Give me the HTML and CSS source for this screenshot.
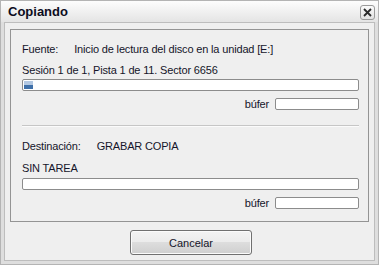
FILE: index.html
```html
<!doctype html>
<html lang="es">
	<head>
		<meta charset="utf-8" />
		<meta name="viewport" content="width=device-width,initial-scale=1" />
		<title>Copiando</title>
		<link rel="stylesheet" href="styles.css">
	</head>
	<body>
		<div class="window">
			<div class="titlebar">
				<span class="title">Copiando</span>
				<button class="close" type="button" aria-label="Cerrar">
					<svg width="9" height="9" viewBox="0 0 9 9"><path d="M1 1 8 8M8 1 1 8" stroke="#2a2a2a" stroke-width="1.8" fill="none" /></svg>
				</button>
			</div>

			<div class="client">
				<section class="group">
					<div class="line line-first">
						<span class="label">Fuente:</span>
						<span>Inicio de lectura del disco en la unidad [E:]</span>
					</div>
					<div class="line line-status">Sesión 1 de 1, Pista 1 de 11. Sector 6656</div>
					<div class="bar bar-main"><div class="fill" style="width: 9px"></div></div>
					<div class="buffer">
						<span>búfer</span>
						<div class="bar bar-small"></div>
					</div>

					<div class="sep"></div>

					<div class="line line-dest">
						<span class="label">Destinación:</span>
						<span>GRABAR COPIA</span>
					</div>
					<div class="line line-status2">SIN TAREA</div>
					<div class="bar bar-main bar-second"></div>
					<div class="buffer">
						<span>búfer</span>
						<div class="bar bar-small"></div>
					</div>
				</section>

				<div class="actions">
					<button class="btn" type="button">Cancelar</button>
				</div>
			</div>
		</div>
	</body>
</html>
```
FILE: styles.css
```css
html,
body {
	margin: 0;
	padding: 0;
	background: #dadada;
}

body {
	font-family: "Liberation Sans", Arial, sans-serif;
	font-size: 11px;
	color: #15152a;
}

.window {
	box-sizing: border-box;
	width: 379px;
	height: 265px;
	border: 1px solid #b4b4b4;
	background: #dedede;
}

.titlebar {
	display: flex;
	align-items: center;
	justify-content: space-between;
	height: 21px;
	padding: 0 3px 0 7px;
	background: linear-gradient(#fdfdfd, #e4e4e4);

	& .title {
		font-size: 13px;
		font-weight: 700;
		color: #0c0c1e;
	}
}

.close {
	display: flex;
	align-items: center;
	justify-content: center;
	box-sizing: border-box;
	width: 15px;
	height: 15px;
	margin-top: 2px;
	padding: 0;
	border: 1px solid #9a9a9a;
	border-radius: 3px;
	background: linear-gradient(#fbfbfb, #e2e2e2);
}

.client {
	margin: 0 3px 3px;
	padding: 6px 5px 5px;
	border: 1px solid #bdbdbd;
	background: #efefef;
}

.group {
	box-sizing: border-box;
	height: 193px;
	padding: 12px 9px 0 11px;
	border: 1px solid #949494;
}

.line {
	display: flex;
	gap: 16px;
	height: 14px;
	line-height: 14px;
	letter-spacing: -0.16px;
	white-space: nowrap;
}

.line-status {
	margin-top: 7px;
}

.line-dest {
	margin-top: 12px;
}

.line-status2 {
	margin-top: 8px;
}

.bar {
	box-sizing: border-box;
	height: 12px;
	border: 1px solid #8c8c8c;
	border-radius: 2px;
	background: #fff;
	padding: 1px;
}

.bar-main {
	margin-top: 2px;
}

.bar-second {
	margin-top: 3px;
}

.fill {
	height: 100%;
	background: linear-gradient(#b3c8e2 0 45%, #3f70a9 45%);
}

.buffer {
	display: flex;
	align-items: center;
	justify-content: flex-end;
	gap: 6px;
	height: 12px;
	margin-top: 7px;
	line-height: 12px;
	letter-spacing: -0.16px;

	& .bar-small {
		width: 84px;
	}
}

.sep {
	margin-top: 15px;
	border-top: 1px solid #c6c6c6;
	border-bottom: 1px solid #fbfbfb;
}

.actions {
	display: flex;
	justify-content: center;
	margin-top: 8px;
	padding-left: 3px;
}

.btn {
	box-sizing: border-box;
	width: 122px;
	height: 25px;
	border: 1px solid #707070;
	border-radius: 3px;
	background: linear-gradient(#f3f3f3 0, #ebebeb 50%, #dddddd 50%, #cfcfcf 100%);
	box-shadow: inset 0 0 0 1px #fbfbfb;
	font-family: inherit;
	font-size: 11px;
	color: #15152a;
}
```
